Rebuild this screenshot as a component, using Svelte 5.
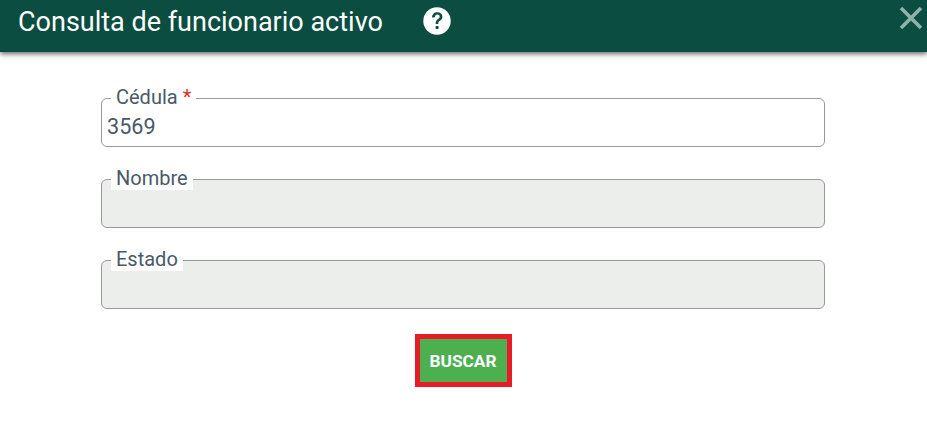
<script lang="ts">
	const fields = [
		{ label: 'Cédula', value: '3569', required: true, disabled: false },
		{ label: 'Nombre', value: '', required: false, disabled: true },
		{ label: 'Estado', value: '', required: false, disabled: true }
	];
</script>

<div class="dialog">
	<header class="header">
		<h2 class="title">Consulta de funcionario activo</h2>
		<svg class="help" width="28" height="28" viewBox="0 0 28 28" aria-hidden="true">
			<circle cx="14" cy="14" r="13.700" fill="#fff" />
			<path
				d="M9 10.600C9.100 7.200 11.200 5.300 14.300 5.300c3.100 0 5.100 1.800 5.100 4.400 0 1.900-.9 2.900-2.300 3.900-1.300.9-1.800 1.500-1.800 2.900v.6h-2.600v-.9c0-2 .7-3 2.100-4 1.200-.9 1.900-1.500 1.900-2.500 0-1.300-.9-2.100-2.300-2.100-1.500 0-2.400 1-2.500 2.600z"
				fill="#0b4d41"
			/>
			<rect x="12.600" y="18.900" width="2.900" height="3.100" rx="0.400" fill="#0b4d41" />
		</svg>
		<button class="close" type="button" aria-label="Cerrar">
			<svg width="24" height="24" viewBox="0 0 24 24" aria-hidden="true">
				<path d="M2 2 22 22M22 2 2 22" stroke="#8fb3a9" stroke-width="3.600" fill="none" />
			</svg>
		</button>
	</header>

	<form class="form">
		{#each fields as field}
			<div class="field">
				<span class="label">
					{field.label}{#if field.required}<span class="required">*</span>{/if}
				</span>
				<div class="input" class:disabled={field.disabled}>{field.value}</div>
			</div>
		{/each}
		<div class="actions">
			<button class="search" type="button">BUSCAR</button>
		</div>
	</form>
</div>

<style>
	:global(body) {
		background: #fff;
		font-family: Roboto, 'Liberation Sans', sans-serif;
	}

	.dialog {
		width: 927px;
		height: 423px;
		overflow: hidden;
		background: #fff;
	}

	.header {
		display: flex;
		align-items: center;
		height: 52px;
		padding: 0 0 8px 18px;
		box-sizing: border-box;
		position: relative;
		background: #0b4d41;
		box-shadow: 0 2px 5px rgba(0, 0, 0, 0.6);
		color: #fff;
	}

	.title {
		margin: 0;
		font-size: 27px;
		font-weight: 400;
		line-height: 30px;
	}

	.help {
		margin-left: 40px;
		margin-top: -2px;
	}

	.close {
		position: absolute;
		top: 6px;
		right: 4px;
		display: flex;
		padding: 0;
		border: 0;
		background: none;
	}

	.form {
		display: flex;
		flex-direction: column;
		gap: 32px;
		padding: 46px 102px 0 101px;
	}

	.field {
		position: relative;
	}

	.label {
		position: absolute;
		top: -12px;
		left: 10px;
		padding: 0 5px;
		background: #fff;
		color: #4a5a68;
		font-size: 20px;
		line-height: 23px;
	}

	.required {
		margin-left: 5px;
		color: #d93030;
	}

	.input {
		height: 49px;
		box-sizing: border-box;
		padding: 15px 5px 0;
		border: 1px solid #999;
		border-radius: 6px;
		color: #4a5a68;
		font-size: 21.600px;
		line-height: 25px;
	}

	.input.disabled {
		background: #eceeec;
	}

	.actions {
		display: flex;
		justify-content: center;
		margin-top: -7px;
	}

	.search {
		width: 97px;
		height: 53px;
		box-sizing: border-box;
		border: 5px solid #e81c26;
		background: #4caf50;
		color: #fff;
		font-family: inherit;
		font-size: 17.300px;
		font-weight: 700;
		padding: 0;
	}
</style>
